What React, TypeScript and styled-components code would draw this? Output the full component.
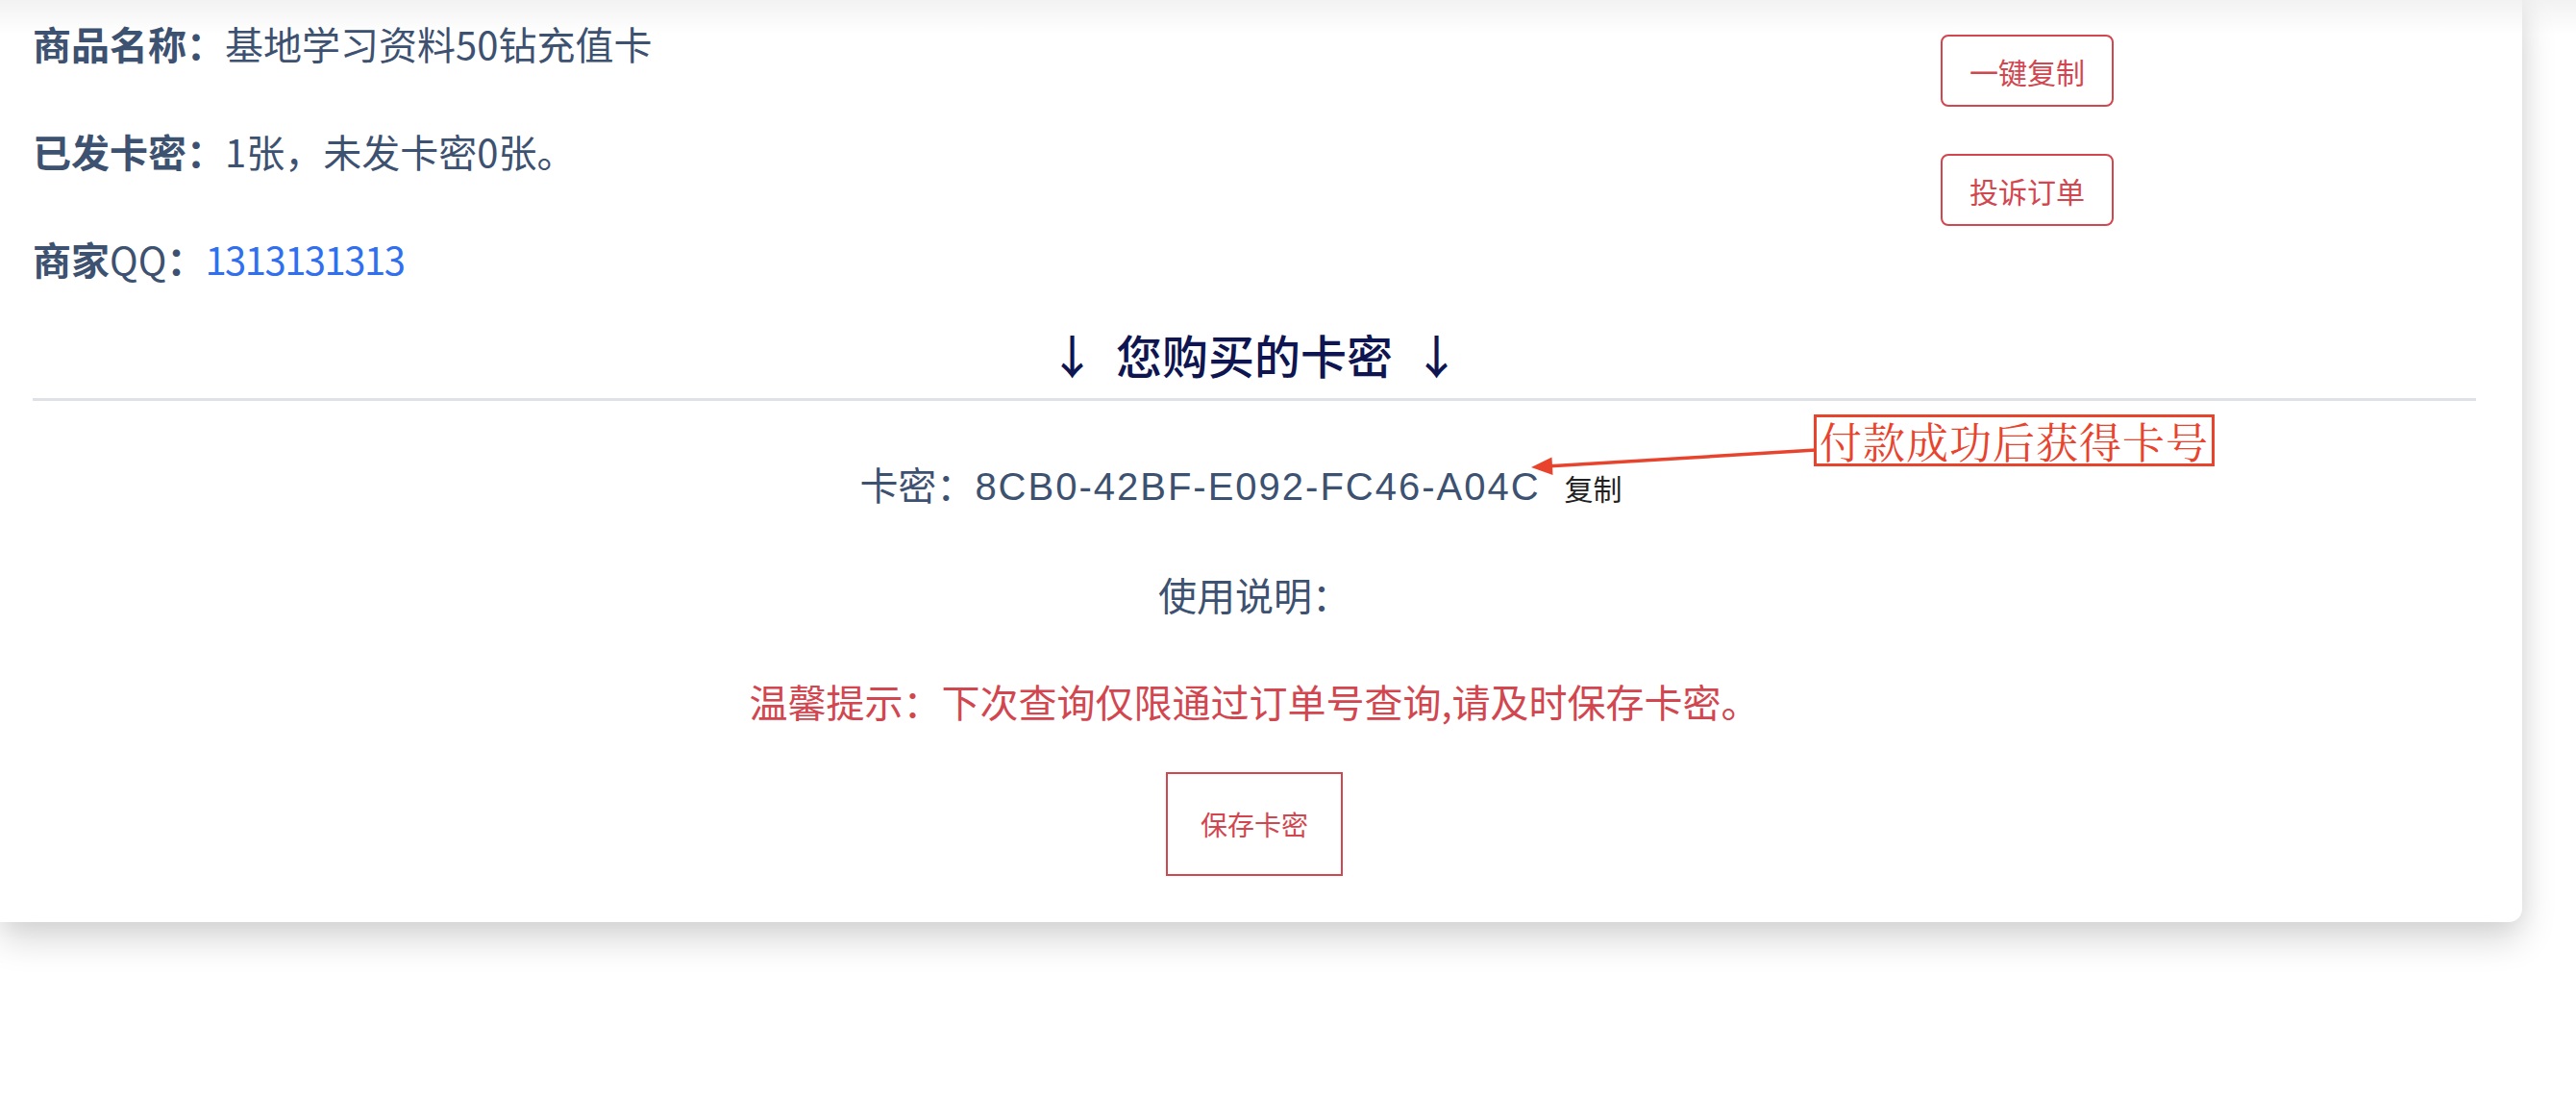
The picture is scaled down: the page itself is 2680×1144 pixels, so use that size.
import styled, { createGlobalStyle } from "styled-components";

const GlobalStyle = createGlobalStyle`
	* {
		box-sizing: border-box;
	}
	html,
	body {
		margin: 0;
		padding: 0;
		background: #ffffff;
	}
	body {
		font-family: "Noto Sans CJK SC", "Noto Sans", sans-serif;
	}
`;

const Page = styled.div`
	position: relative;
	min-height: 1144px;
`;

// shadow cast by the header that sits above the visible area
const TopShade = styled.div`
	position: absolute;
	top: 0;
	left: 0;
	right: 0;
	height: 36px;
	background: linear-gradient(rgba(0, 0, 0, 0.05), rgba(0, 0, 0, 0));
	pointer-events: none;
	z-index: 3;
`;

const Card = styled.div`
	position: relative;
	width: 2624px;
	background: #ffffff;
	border-bottom-right-radius: 14px;
	box-shadow: 0 18px 36px rgba(0, 0, 0, 0.16), 0 0 24px rgba(0, 0, 0, 0.05);
	padding: 15px 48px 48px 34px;
`;

const InfoGrid = styled.div`
	display: grid;
	grid-template-columns: 1fr 557px;
`;

const InfoList = styled.div`
	display: flex;
	flex-direction: column;
	gap: 52px;
`;

const InfoRow = styled.div`
	font-size: 40px;
	line-height: 60px;
	color: #3d5170;
	white-space: nowrap;
`;

const Label = styled.b`
	font-weight: 700;
`;

const Plain = styled.span`
	font-weight: 400;
`;

const QQ = styled.span`
	color: #2f6ff0;
	letter-spacing: -1.5px;
`;

const Actions = styled.div`
	display: flex;
	flex-direction: column;
	align-items: flex-start;
	gap: 49px;
	padding-top: 21px;
`;

const OutlineButton = styled.button`
	width: 180px;
	height: 75px;
	padding: 0;
	border: 2px solid #d1464f;
	border-radius: 8px;
	background: #ffffff;
	color: #d1464f;
	font-family: inherit;
	font-size: 30px;
	cursor: pointer;
`;

const Heading = styled.h2`
	margin: 33px 0 0;
	text-align: center;
	font-size: 48px;
	line-height: 72px;
	font-weight: 500;
	color: #0e1550;
	white-space: pre;
`;

const Rule = styled.hr`
	margin: 10px 0 0;
	border: 0;
	height: 3px;
	background: #dee2e6;
`;

const Secret = styled.div`
	display: flex;
	flex-direction: column;
	align-items: center;
	padding-top: 56px;
`;

const Line = styled.p<{ $warn?: boolean }>`
	margin: 0;
	font-size: 40px;
	line-height: 60px;
	color: ${(p) => (p.$warn ? "#d2464f" : "#3d5170")};
	white-space: nowrap;
	& + & {
		margin-top: 51px;
	}
`;

const Code = styled.span`
	font-family: "Liberation Sans", Arial, sans-serif;
	letter-spacing: 2px;
	margin-right: 25px;
`;

const CopyLink = styled.span`
	font-size: 30px;
	color: #222222;
	margin-right: 28px;
`;

const SaveButton = styled.button`
	margin-top: 44px;
	width: 184px;
	height: 108px;
	padding: 0;
	border: 2px solid #d2464f;
	border-radius: 0;
	background: #ffffff;
	color: #d2464f;
	font-family: inherit;
	font-size: 28px;
	cursor: pointer;
`;

const Note = styled.div`
	position: absolute;
	left: 1887px;
	top: 431px;
	height: 54px;
	padding: 0 3px;
	border: 3px solid #e8432d;
	background: #ffffff;
	color: #e8432d;
	font-family: "Noto Serif CJK SC", "Noto Sans CJK SC", serif;
	font-weight: 400;
	font-size: 44px;
	letter-spacing: 1px;
	line-height: 48px;
	white-space: nowrap;
`;

const NoteArrow = styled.svg`
	position: absolute;
	left: 1585px;
	top: 455px;
	overflow: visible;
`;

export default function App() {
	return (
		<Page>
			<GlobalStyle />
			<TopShade />
			<Card>
				<InfoGrid>
					<InfoList>
						<InfoRow>
							<Label>商品名称：</Label>基地学习资料50钻充值卡
						</InfoRow>
						<InfoRow>
							<Label>已发卡密：</Label>1张，未发卡密0张。
						</InfoRow>
						<InfoRow>
							<Label>
								商家<Plain>QQ</Plain>：
							</Label>
							<QQ>1313131313</QQ>
						</InfoRow>
					</InfoList>
					<Actions>
						<OutlineButton>一键复制</OutlineButton>
						<OutlineButton>投诉订单</OutlineButton>
					</Actions>
				</InfoGrid>

				<Heading>{"↓  您购买的卡密  ↓"}</Heading>
				<Rule />

				<Secret>
					<Line>
						卡密：<Code>8CB0-42BF-E092-FC46-A04C</Code>
						<CopyLink>复制</CopyLink>
					</Line>
					<Line>使用说明：</Line>
					<Line $warn>温馨提示：下次查询仅限通过订单号查询,请及时保存卡密。</Line>
					<SaveButton>保存卡密</SaveButton>
				</Secret>

				<NoteArrow width="310" height="40" viewBox="0 0 310 40">
					<line x1="28" y1="29.8" x2="304" y2="13" stroke="#e8432d" strokeWidth="3.5" />
					<polygon points="8,31 30.5,39 29.5,20.5" fill="#e8432d" />
				</NoteArrow>
				<Note>付款成功后获得卡号</Note>
			</Card>
		</Page>
	);
}
